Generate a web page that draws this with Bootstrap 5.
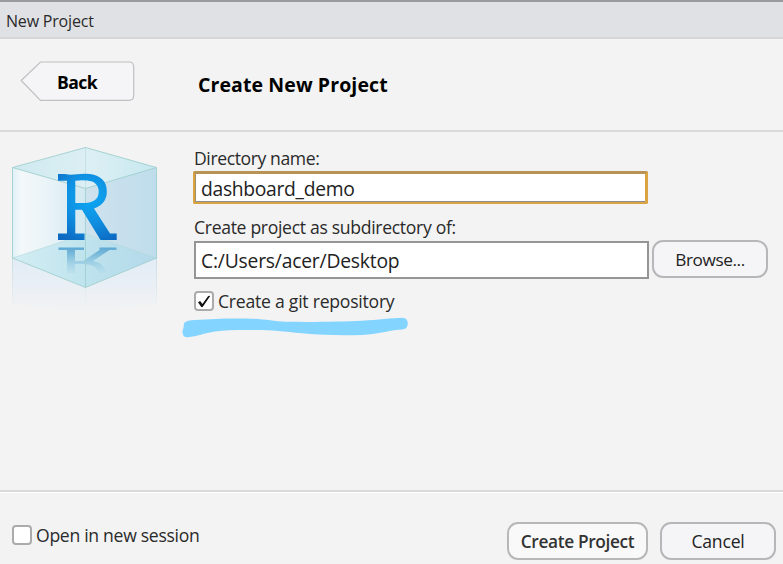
<!DOCTYPE html>
<html lang="en">
<head>
<meta charset="utf-8">
<title>New Project</title>
<meta name="viewport" content="width=device-width, initial-scale=1">
<link href="https://cdn.jsdelivr.net/npm/bootstrap@5.3.0/dist/css/bootstrap.min.css" rel="stylesheet">
<style>
body{font-family:"Open Sans","Noto Sans",sans-serif;background:#f3f3f3;color:#2a2a2a;font-size:17.6px;line-height:24px}
.dialog{height:564px}
.titlebar{height:39px;background:#e0e1e5;border-top:2px solid #9b9b9d;border-bottom:2px solid #d6d6d8;padding:0 6px;font-size:16px;line-height:38px;letter-spacing:-.19px}
.wizard-head{height:93px;border-bottom:2px solid #dadada}
.back{width:115px;height:41px;margin:22px 0 0 20px;padding:0;border:0;position:relative;color:#000;font-weight:700;font-size:17.6px;line-height:41px;letter-spacing:-.6px}
.back svg{position:absolute;left:0;top:0}
.back span{position:relative;display:block;padding:1px 0 0 37px;text-align:left;line-height:40px}
.heading{margin:33px 0 0 63px;font-size:19.5px;line-height:26px;font-weight:700;color:#000;letter-spacing:.1px}
.art{width:194px}
.fields{padding-top:14px}
.label-name{height:25px;letter-spacing:-.41px}
.label-dir{margin-top:11px;height:26px;letter-spacing:-.32px}
.field,.field:focus{border:2px solid #959595;border-radius:0;padding:0 0 0 5px;color:#222;background:#fff;font-size:19.3px;line-height:30px;width:455px;box-shadow:none}
.field.field-name{height:33px;margin-left:-1px;border:2px solid #d9a441;border-top:3px solid #b89355;border-right-width:3px;border-radius:2px;box-shadow:inset 0 -1px #8f8f8f,inset 1px 0 #a08c68;padding:0 0 0 6px;line-height:26px;letter-spacing:-.3px}
.field.field-dir{height:38px;letter-spacing:-.2px}
.tool-btn{height:38px;border:2px solid #b7b7b9;border-radius:11px;background:#f5f5f8;color:#222;font-size:17.6px;line-height:36px;padding:0}
.browse{width:116px;margin:-1px 0 0 3px;font-size:17.2px;letter-spacing:-.4px}
.create{width:141px;margin-top:30px;background:#f9f9f9;font-weight:600;font-size:17.3px;letter-spacing:-.35px;color:#333}
.cancel{width:116px;margin:30px 0 0 12px;letter-spacing:-.2px;line-height:35px}
.tick{width:20px;height:20px;border:2px solid #ababab;border-radius:4px;background:#fff}
.git{margin-top:10px;height:24px;gap:4px;letter-spacing:-.24px}
.git .caption,.open-new .caption{margin-top:-1px}
.open-new{margin-top:31px;height:24px;gap:4px;letter-spacing:-.3px}
.stroke{display:block;margin:2px 0 0 -14px}
.wizard-foot{height:74px;border-top:2px solid #d9d9d9;box-shadow:inset 0 1px #fff;padding:0 7px 0 12px}
</style>
<script src="https://cdn.jsdelivr.net/npm/bootstrap@5.3.0/dist/js/bootstrap.bundle.min.js"></script>
</head>
<body>
<div class="dialog d-flex flex-column overflow-hidden">
  <div class="titlebar">New Project</div>
  <div class="wizard-head d-flex align-items-start">
    <button class="btn back" type="button">
      <svg width="115" height="41" viewBox="0 0 115 41"><path d="M1.200 19.500 20.500 1H109Q113.700 1 113.700 6V34.500Q113.700 39.300 109 39.300H20.500Z" fill="#f5f5f8" stroke="#c0c0c2" stroke-width="1.200"/></svg>
      <span>Back</span>
    </button>
    <h1 class="heading">Create New Project</h1>
  </div>
  <main class="d-flex flex-grow-1">
    <div class="art flex-shrink-0">
      <svg width="180" height="188" viewBox="0 132 180 188">
        <defs>
          <linearGradient id="gl"><stop offset="0" stop-color="#dff1f6"/><stop offset=".12" stop-color="#f3f8fa"/><stop offset=".5" stop-color="#e9f3f7"/><stop offset="1" stop-color="#d2e8f0"/></linearGradient>
          <linearGradient id="gr"><stop offset="0" stop-color="#cfe2ed"/><stop offset="1" stop-color="#bfddec"/></linearGradient>
          <linearGradient id="gt"><stop offset="0" stop-color="#cfeaef"/><stop offset=".55" stop-color="#dceff4"/><stop offset="1" stop-color="#c6e8ee"/></linearGradient>
          <linearGradient id="gb"><stop offset="0" stop-color="#d3edf3"/><stop offset=".5" stop-color="#bfe4ee"/><stop offset="1" stop-color="#b3d8e9"/></linearGradient>
          <linearGradient id="gf" x1="0" y1="0" x2="0" y2="1"><stop offset="0" stop-color="#e2ecf6"/><stop offset=".5" stop-color="#e9eff5"/><stop offset="1" stop-color="#f3f3f3"/></linearGradient>
          <linearGradient id="ge" x1="0" y1="0" x2="0" y2="1"><stop offset="0" stop-color="#c8dde2"/><stop offset="1" stop-color="#f3f3f3"/></linearGradient>
          <radialGradient id="rr" gradientUnits="userSpaceOnUse" cx="90" cy="198" r="48"><stop offset="0" stop-color="#0ba8f4"/><stop offset=".5" stop-color="#1090e2"/><stop offset="1" stop-color="#0c68c0"/></radialGradient>
          <linearGradient id="rf" gradientUnits="userSpaceOnUse" x1="0" y1="247" x2="0" y2="274"><stop offset="0" stop-color="#5aa7d2"/><stop offset=".4" stop-color="#8cc4df"/><stop offset="1" stop-color="#b0dae9" stop-opacity=".3"/></linearGradient>
        </defs>
        <path d="M12.500 258 85.500 288 156.500 258V304L85.500 314 12.500 304Z" fill="url(#gf)"/>
        <path d="M12 258h1v46h-1zM156 258h1v46h-1zM85 288h1v24h-1z" fill="url(#ge)"/>
        <path d="M12.500 167.500 85.500 147.500V234L12.500 258Z" fill="url(#gl)"/>
        <path d="M85.500 147.500 156.500 167.500V258L85.500 234Z" fill="url(#gr)"/>
        <path d="M12.500 258 85.500 234 156.500 258 85.500 287.500Z" fill="url(#gb)"/>
        <path d="M12.500 167.500 85.500 147.500 156.500 167.500 85.500 188.500Z" fill="url(#gt)"/>
        <path fill="url(#rf)" d="M58.500 247.500H84V250H75V261H83L99.500 250V247.500H116.500V250H109.500L93 261Q106 264 105.500 273H98.500Q97 265 84 264H75V273H67V250H58.500Z"/>
        <g fill="none" stroke="#9fcfce" stroke-width=".9">
          <path d="M12.500 167.500 85.500 147.500 156.500 167.500V258L85.500 287.500 12.500 258ZM12.500 167.500 85.500 188.500 156.500 167.500M85.500 188.500V287.500"/>
          <path d="M85.500 147.500V188.500M12.500 258 85.500 234 156.500 258" opacity=".45"/>
        </g>
        <path fill="url(#rr)" fill-rule="evenodd" d="M58 174H65Q70 175.300 77 174.300Q84 173.200 90 174Q106.800 176.500 106.800 191.500Q106.800 204 94 208.500L110 233.500H116.700V240H100.500L82 209.800H75.300V233.500H84.500V240H58V233.500H67V180.800H58ZM75.300 180.800V203H85Q98.700 202.200 98.700 192Q98.700 181.500 87 180.500Q81 179.800 75.300 180.800Z"/>
      </svg>
    </div>
    <div class="fields">
      <label class="label-name d-block" for="dirname">Directory name:</label>
      <input class="form-control field field-name" id="dirname" type="text" value="dashboard_demo">
      <label class="label-dir d-block" for="parent">Create project as subdirectory of:</label>
      <div class="d-flex">
        <input class="form-control field field-dir" id="parent" type="text" value="C:/Users/acer/Desktop">
        <button class="btn tool-btn browse" type="button">Browse...</button>
      </div>
      <div class="d-flex align-items-center git">
        <span class="tick"><svg class="d-block" width="16" height="16" viewBox="0 0 16 16"><path d="M2 9.300Q3.500 8 4.400 8.300L6.400 11 12 3.200Q13.300 2.300 14.200 3L7.200 13.300Q6 14.800 4.900 13.600Z" fill="#111"/></svg></span>
        <span class="caption">Create a git repository</span>
      </div>
      <svg class="stroke" width="230" height="24" viewBox="180 315 230 24"><path d="M184 323Q187 320 195 320C215 318.500 240 317.800 258 319C270 320 278 321.700 290 321.800C315 322.200 345 321.500 362 320.700C378 320 392 318 402 317.800Q407.700 317.500 407.800 324Q407.500 329 402 329.600C385 331 378 334.500 362 335C345 335.500 325 335.500 302 333.300C285 331.500 270 330 258 330C240 330 228 329.700 215 331.500C204 333 197 336.500 188 337.200Q182 337.500 182.500 331Q184 327 184 323Z" fill="#83d5ff"/></svg>
    </div>
  </main>
  <div class="wizard-foot d-flex align-items-start">
    <div class="d-flex align-items-center open-new"><span class="tick"></span><span class="caption">Open in new session</span></div>
    <button class="btn tool-btn create ms-auto" type="button">Create Project</button>
    <button class="btn tool-btn cancel" type="button">Cancel</button>
  </div>
</div>
</body>
</html>
